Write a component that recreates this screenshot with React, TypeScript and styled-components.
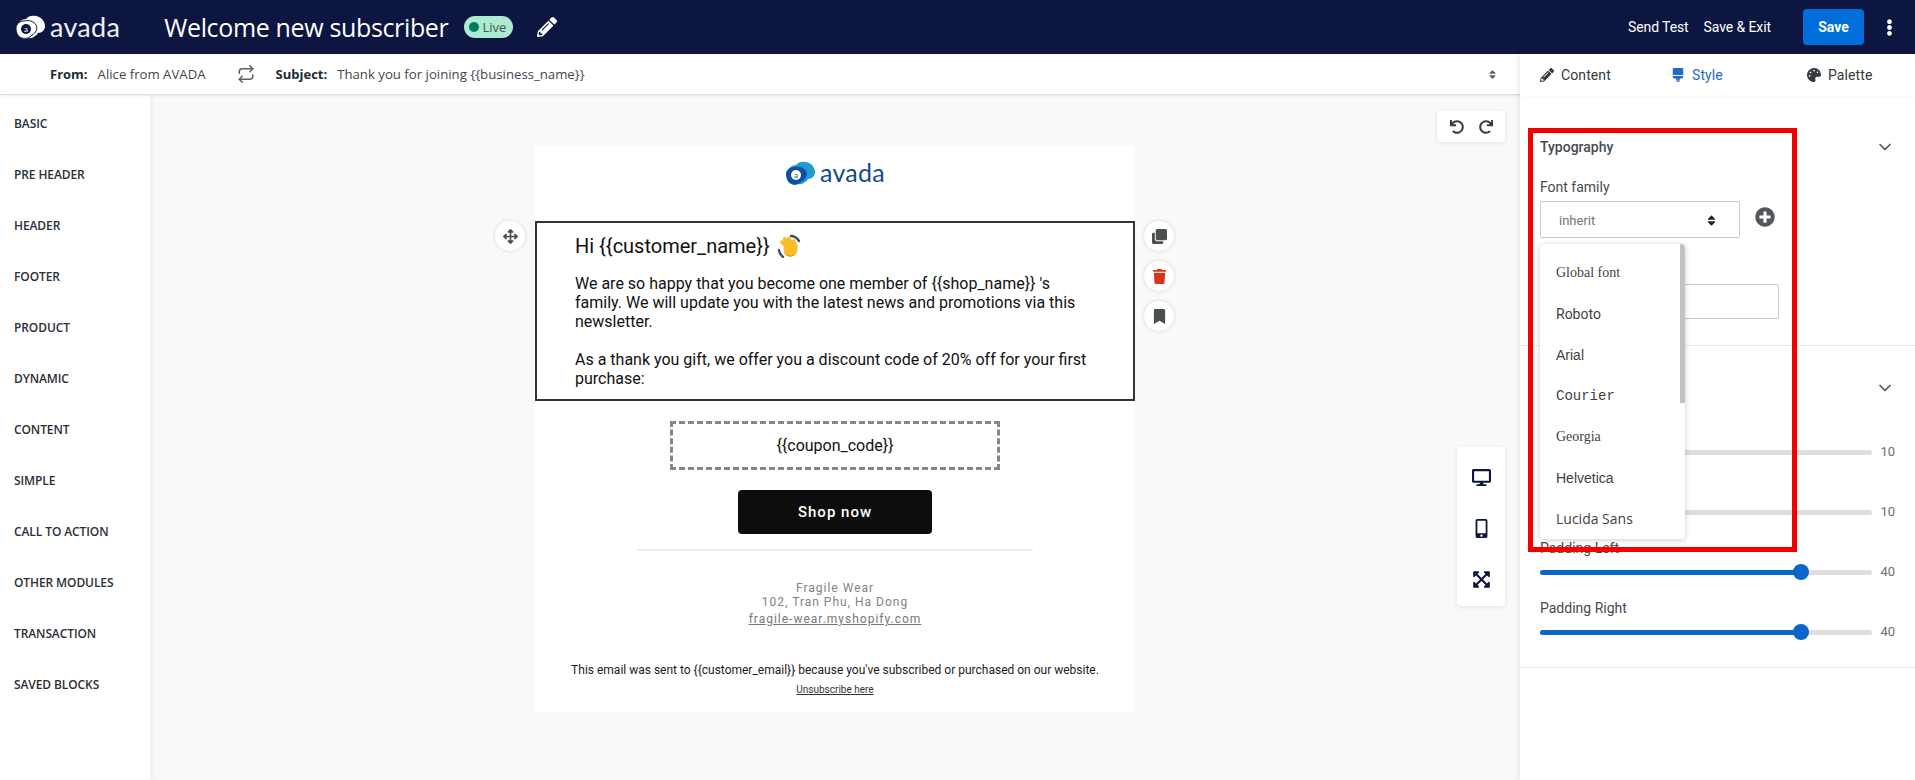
import styled, { createGlobalStyle } from "styled-components"
import {
  FaPencilAlt, FaPalette, FaBrush, FaArrowsAlt, FaClone, FaTrash, FaBookmark,
  FaDesktop, FaMobileAlt, FaExpandArrowsAlt, FaPlusCircle, FaEllipsisV, FaSort,
  FaUndo, FaRedo,
} from "react-icons/fa"
import { FiRepeat, FiChevronDown } from "react-icons/fi"

const GlobalStyle = createGlobalStyle`
  * { box-sizing: border-box; }
  html, body { margin: 0; padding: 0; }
  body {
    font-family: Roboto, "Liberation Sans", sans-serif;
    color: #212b36;
    background: #fff;
  }
`

const Page = styled.div`
  position: relative;
  display: flex;
  flex-direction: column;
  height: 100vh;
  overflow: hidden;
`

/* top bar */
const TopBar = styled.header`
  flex: 0 0 54px;
  display: flex;
  align-items: center;
  padding: 0 17px 0 15px;
  background: #0d1640;
  color: #fff;
`
const LogoBox = styled.div<{ $dark?: boolean }>`
  display: flex;
  align-items: center;
  gap: 4px;
  color: ${({ $dark }) => ($dark ? "#124a8c" : "#eef0f6")};
`
const LogoWord = styled.span<{ $size: number }>`
  font-family: Lato, "Open Sans", sans-serif;
  font-size: ${({ $size }) => $size}px;
  font-weight: 400;
  line-height: 1;
  letter-spacing: 0.3px;
  margin-top: -2px;
`
const PageTitle = styled.h1`
  margin: 0 0 0 44px;
  font-family: "Open Sans", sans-serif;
  font-size: 25px;
  font-weight: 400;
  line-height: 34px;
  letter-spacing: -0.35px;
  white-space: nowrap;
`
const LiveBadge = styled.span`
  display: inline-flex;
  align-items: center;
  gap: 3px;
  height: 22px;
  width: 49px;
  margin-left: 16px;
  padding-left: 5px;
  border-radius: 11px;
  background: #aee9d1;
  color: #35604d;
  font-family: "Open Sans", sans-serif;
  font-size: 13px;
  &::before {
    content: "";
    width: 10px;
    height: 10px;
    border-radius: 50%;
    background: #007f5f;
  }
`
const TitleEdit = styled.span`
  display: flex;
  margin-left: 24px;
  font-size: 20px;
`
const TopActions = styled.div`
  display: flex;
  align-items: center;
  margin-left: auto;
  font-size: 14px;
  letter-spacing: -0.1px;
  color: #fff;
`
const TextAction = styled.span`
  & + & { margin-left: 15px; }
`
const SaveButton = styled.button`
  width: 61px;
  height: 36px;
  margin-left: 32px;
  border: 0;
  border-radius: 4px;
  background: #006fdc;
  color: #fff;
  font: 700 14px Roboto, sans-serif;
`
const MoreButton = styled.span`
  display: flex;
  margin-left: 17px;
  font-size: 17px;
`

const Body = styled.div`
  flex: 1;
  display: flex;
  min-height: 0;
`
const EditorColumn = styled.div`
  flex: 1;
  display: flex;
  flex-direction: column;
  min-width: 0;
`

/* from / subject */
const MetaBar = styled.div`
  flex: 0 0 41px;
  display: flex;
  align-items: center;
  padding: 0 22px 0 50px;
  font-family: "Open Sans", sans-serif;
  font-size: 13.2px;
  color: #3f4650;
  background: #fff;
  border-bottom: 1px solid #dcdcdc;
  box-shadow: 0 1px 2px rgba(0, 0, 0, 0.08);
  position: relative;
  z-index: 2;
`
const MetaLabel = styled.strong`
  font-weight: 700;
  font-size: 13px;
  color: #212b36;
  margin-right: 10px;
`
const SwapIcon = styled.span`
  display: flex;
  margin: 0 21px 0 31px;
  font-size: 18px;
  color: #5c6066;
`
const MetaSort = styled.span`
  display: flex;
  margin-left: auto;
  font-size: 11px;
  color: #5c6066;
`

const EditorBody = styled.div`
  flex: 1;
  display: flex;
  min-height: 0;
`

/* block list */
const BlockList = styled.nav`
  flex: 0 0 150px;
  padding-top: 3px;
  background: #fff;
  box-shadow: 2px 0 6px rgba(0, 0, 0, 0.06);
  position: relative;
  z-index: 1;
`
const BlockItem = styled.div`
  height: 51px;
  padding-left: 14px;
  display: flex;
  align-items: center;
  font-family: "Open Sans", sans-serif;
  font-size: 12px;
  font-weight: 600;
  color: #2b2f36;
  letter-spacing: -0.1px;
`

/* canvas */
const Canvas = styled.main`
  flex: 1;
  position: relative;
  display: flex;
  justify-content: center;
  align-items: flex-start;
  padding-top: 51px;
  background: #f9f9f9;
`
const FloatPanel = styled.div`
  position: absolute;
  right: 15px;
  display: flex;
  background: #fff;
  border-radius: 4px;
  box-shadow: 0 1px 5px rgba(0, 0, 0, 0.1);
  color: #3a3a3a;
`
const HistoryPanel = styled(FloatPanel)`
  top: 16px;
  width: 68px;
  height: 31px;
  align-items: center;
  justify-content: space-around;
  padding: 0 5px;
  font-size: 14px;
`
const DevicePanel = styled(FloatPanel)`
  top: 352px;
  width: 48px;
  height: 159px;
  flex-direction: column;
  align-items: center;
  gap: 32px;
  padding-top: 21px;
  color: #0d1640;
  font-size: 19px;
`

const EmailSheet = styled.article`
  position: relative;
  width: 600px;
  height: 566px;
  background: #fff;
  display: flex;
  flex-direction: column;
  align-items: center;
`
const EmailLogo = styled.div`
  height: 75px;
  padding-top: 14px;
`
const SelectedBlock = styled.section`
  position: relative;
  width: 100%;
  height: 180px;
  padding: 10px 38px 0;
  border: 2px solid #2f3636;
  color: #111;
`
const Greeting = styled.div`
  display: flex;
  align-items: center;
  gap: 7px;
  margin-bottom: 15px;
  font-size: 20px;
  line-height: 26px;
`
const Paragraph = styled.p`
  margin: 0 0 19px;
  font-size: 16px;
  line-height: 19px;
`
const RoundTool = styled.span<{ $color?: string }>`
  width: 30px;
  height: 30px;
  display: flex;
  align-items: center;
  justify-content: center;
  border-radius: 50%;
  background: #fff;
  box-shadow: 0 0 4px rgba(0, 0, 0, 0.14);
  font-size: 15px;
  color: ${({ $color }) => $color || "#4a4f52"};
`
const MoveTool = styled(RoundTool)`
  position: absolute;
  left: -42px;
  top: -2px;
`
const BlockTools = styled.div`
  position: absolute;
  right: -41px;
  top: -2px;
  display: flex;
  flex-direction: column;
  gap: 10px;
`
const CouponBox = styled.div`
  width: 330px;
  height: 49px;
  margin-top: 20px;
  display: flex;
  align-items: center;
  justify-content: center;
  border: 3px dashed #868686;
  font-size: 16px;
  color: #111;
`
const ShopButton = styled.button`
  width: 194px;
  height: 44px;
  margin-top: 20px;
  border: 0;
  border-radius: 4px;
  background: #0d0d0d;
  color: #fff;
  font: 500 15px Roboto, sans-serif;
  letter-spacing: 1px;
`
const Rule = styled.hr`
  width: 396px;
  height: 2px;
  margin: 15px 0 0;
  border: 0;
  background: #eeeeee;
`
const ShopInfo = styled.div`
  margin-top: 30px;
  text-align: center;
  font-size: 12px;
  line-height: 14px;
  letter-spacing: 1px;
  color: #828282;
`
const ShopLink = styled.a`
  display: block;
  margin-top: 3px;
  color: #777;
  text-decoration: underline;
`
const Notice = styled.div`
  margin-top: 37px;
  font-size: 12px;
  line-height: 15px;
  color: #1c1c1c;
`
const Unsubscribe = styled.a`
  margin-top: 6px;
  font-size: 10px;
  line-height: 12px;
  color: #333;
  text-decoration: underline;
`

/* right panel */
const SidePanel = styled.aside`
  flex: 0 0 395px;
  position: relative;
  z-index: 3;
  background: #fff;
  box-shadow: -2px 0 6px rgba(0, 0, 0, 0.07);
`
const Tabs = styled.div`
  height: 42px;
  display: flex;
  align-items: center;
  padding-left: 20px;
  box-shadow: 0 1px 2px rgba(0, 0, 0, 0.03);
`
const Tab = styled.div<{ $active?: boolean; $width: number }>`
  flex: 0 0 ${({ $width }) => $width}px;
  display: flex;
  align-items: center;
  gap: 7px;
  font-size: 14px;
  letter-spacing: 0.1px;
  color: ${({ $active }) => ($active ? "#1f6bc4" : "#333a40")};
  svg { font-size: 14px; }
`
const Section = styled.section<{ $height: number; $top: number }>`
  height: ${({ $height }) => $height}px;
  padding: ${({ $top }) => $top}px 20px 0;
  border-bottom: 1px solid #e8e8e8;
`
const SectionHead = styled.div`
  display: flex;
  align-items: center;
  justify-content: space-between;
  height: 20px;
  font-size: 14px;
  font-weight: 500;
  color: #454b50;
  svg { font-size: 20px; color: #555; }
`
const FieldLabel = styled.div<{ $top?: number }>`
  min-height: 16px;
  margin-top: ${({ $top }) => $top || 0}px;
  font-size: 14px;
  line-height: 16px;
  color: #454b50;
`
const FontRow = styled.div`
  display: flex;
  align-items: flex-start;
  gap: 15px;
  margin-top: 6px;
`
const SelectBox = styled.div`
  width: 200px;
  height: 37px;
  padding: 1px 21px 0 18px;
  display: flex;
  align-items: center;
  justify-content: space-between;
  border: 1px solid #c4cdd5;
  border-radius: 2px;
  font-size: 13px;
  color: #6f7479;
  svg { font-size: 13px; color: #222; }
`
const AddFont = styled.span`
  display: flex;
  margin-top: 6px;
  font-size: 20px;
  color: #54585c;
`
const SizeInput = styled.div`
  width: 239px;
  height: 35px;
  margin-top: 6px;
  border: 1px solid #c4cdd5;
  border-radius: 2px;
`
const SliderField = styled.div`
  height: 60px;
  padding-top: 12px;
`
const SliderList = styled.div`
  margin-top: 10px;
`
const SliderRow = styled.div`
  display: flex;
  align-items: center;
  gap: 8px;
  height: 16px;
  margin-top: 8px;
`
const SliderTrack = styled.div`
  position: relative;
  flex: 1;
  height: 5px;
  border-radius: 3px;
  background: #dedede;
`
const SliderFill = styled.div`
  height: 100%;
  border-radius: 3px;
  background: #0a66c8;
`
const SliderThumb = styled.span`
  position: absolute;
  top: -6px;
  width: 16px;
  height: 16px;
  margin-left: -8px;
  border-radius: 50%;
  background: #0a66c8;
`
const SliderValue = styled.span`
  font-size: 13px;
  line-height: 16px;
  color: #6b7075;
`

/* open font menu sits over the panel */
const FontMenu = styled.div`
  position: absolute;
  left: 20px;
  top: 190px;
  width: 145px;
  height: 295px;
  overflow: hidden;
  background: #fff;
  border-radius: 4px;
  box-shadow: 0 1px 6px rgba(0, 0, 0, 0.2);
  padding-top: 8px;
  z-index: 5;
`
const FontOption = styled.div<{ $font: string }>`
  height: 41px;
  padding-left: 16px;
  display: flex;
  align-items: center;
  font-family: ${({ $font }) => $font};
  font-size: 14px;
  color: #3f3f3f;
`
const MenuScroll = styled.span`
  position: absolute;
  top: 0;
  right: 0;
  width: 5px;
  height: 159px;
  background: #c2c2c2;
`
const Annotation = styled.div`
  position: absolute;
  left: 1528px;
  top: 128px;
  width: 269px;
  height: 424px;
  border: 5px solid #f50000;
  z-index: 6;
  pointer-events: none;
`

const blocks = ["BASIC", "PRE HEADER", "HEADER", "FOOTER", "PRODUCT", "DYNAMIC", "CONTENT", "SIMPLE", "CALL TO ACTION", "OTHER MODULES", "TRANSACTION", "SAVED BLOCKS"]

const fonts = [
  { name: "Global font", family: "'Liberation Serif', serif" },
  { name: "Roboto", family: "Roboto, sans-serif" },
  { name: "Arial", family: "'Liberation Sans', sans-serif" },
  { name: "Courier", family: "'Liberation Mono', monospace" },
  { name: "Georgia", family: "'Liberation Serif', serif" },
  { name: "Helvetica", family: "'Liberation Sans', sans-serif" },
  { name: "Lucida Sans", family: "'Open Sans', sans-serif" },
]

// the first two labels are covered by the open menu in the picture
const paddings = [
  { label: "", value: 10 },
  { label: "", value: 10 },
  { label: "Padding Left", value: 40 },
  { label: "Padding Right", value: 40 },
]

function LogoMark({ dark }: { dark?: boolean }) {
  const back = dark ? "#1e9ad6" : "#ffffff"
  const front = dark ? "#0f4f9c" : "#ffffff"
  const hole = dark ? "#ffffff" : "#0d1640"
  return (
    <svg width="31" height="26" viewBox="0 0 31 26">
      <path d="M3 12c0-4 4-7 8-7 2-3 6-4 10-3 5 1 9 5 9 10 0 4-3 7-7 7-2 3-6 6-10 5-2 2-6 1-8-1-2-2-3-7-2-11z" fill={back} />
      <path
        d="M1 14c0-4 4-7 8-7 5-1 10 0 12 4 2 4 0 8-4 10-2 3-7 4-10 3-4-1-6-5-6-10z"
        fill={front}
        stroke={dark ? "none" : "#0d1640"}
        strokeWidth="1"
      />
      <circle cx="11" cy="15" r="5" fill={hole} />
      <text x="11" y="18" fontSize="8" textAnchor="middle" fontFamily="Lato, sans-serif" fill={dark ? "#0f4f9c" : "#fff"}>a</text>
    </svg>
  )
}

function WaveHand() {
  return (
    <svg width="24" height="24" viewBox="0 0 24 24">
      <path d="M14 2c3 0 6 2 8 5M2 16c0 3 2 5 4 7" fill="none" stroke="#3d4f5c" strokeWidth="2.4" strokeLinecap="round" />
      <g stroke="#fcbc25" strokeWidth="3.6" strokeLinecap="round">
        <path d="M11 14 5 8M13 12 7.5 5M16 11l-4.5-6.5M19 12l-2.5-5" />
      </g>
      <circle cx="13.5" cy="15.5" r="7" fill="#fcbc25" />
      <path d="M8 19c2 3 6 4 9 2" fill="none" stroke="#e39a10" strokeWidth="1.2" strokeLinecap="round" />
    </svg>
  )
}

export default function App() {
  return (
    <Page>
      <GlobalStyle />
      <TopBar>
        <LogoBox>
          <LogoMark />
          <LogoWord $size={27}>avada</LogoWord>
        </LogoBox>
        <PageTitle>Welcome new subscriber</PageTitle>
        <LiveBadge>Live</LiveBadge>
        <TitleEdit><FaPencilAlt /></TitleEdit>
        <TopActions>
          <TextAction>Send Test</TextAction>
          <TextAction>Save &amp; Exit</TextAction>
          <SaveButton>Save</SaveButton>
          <MoreButton><FaEllipsisV /></MoreButton>
        </TopActions>
      </TopBar>
      <Body>
        <EditorColumn>
          <MetaBar>
            <MetaLabel>From:</MetaLabel>
            Alice from AVADA
            <SwapIcon><FiRepeat /></SwapIcon>
            <MetaLabel>Subject:</MetaLabel>
            {"Thank you for joining {{business_name}}"}
            <MetaSort><FaSort /></MetaSort>
          </MetaBar>
          <EditorBody>
            <BlockList>
              {blocks.map((b) => <BlockItem key={b}>{b}</BlockItem>)}
            </BlockList>
            <Canvas>
              <HistoryPanel><FaUndo /><FaRedo /></HistoryPanel>
              <DevicePanel><FaDesktop /><FaMobileAlt /><FaExpandArrowsAlt /></DevicePanel>
              <EmailSheet>
                <EmailLogo>
                  <LogoBox $dark>
                    <LogoMark dark />
                    <LogoWord $size={25}>avada</LogoWord>
                  </LogoBox>
                </EmailLogo>
                <SelectedBlock>
                  <MoveTool><FaArrowsAlt /></MoveTool>
                  <BlockTools>
                    <RoundTool><FaClone /></RoundTool>
                    <RoundTool $color="#d5361b"><FaTrash /></RoundTool>
                    <RoundTool><FaBookmark /></RoundTool>
                  </BlockTools>
                  <Greeting>{"Hi {{customer_name}}"} <WaveHand /></Greeting>
                  <Paragraph>{"We are so happy that you become one member of {{shop_name}} 's family. We will update you with the latest news and promotions via this newsletter."}</Paragraph>
                  <Paragraph>As a thank you gift, we offer you a discount code of 20% off for your first purchase:</Paragraph>
                </SelectedBlock>
                <CouponBox>{"{{coupon_code}}"}</CouponBox>
                <ShopButton>Shop now</ShopButton>
                <Rule />
                <ShopInfo>
                  Fragile Wear<br />
                  102, Tran Phu, Ha Dong
                  <ShopLink>fragile-wear.myshopify.com</ShopLink>
                </ShopInfo>
                <Notice>{"This email was sent to {{customer_email}} because you've subscribed or purchased on our website."}</Notice>
                <Unsubscribe>Unsubscribe here</Unsubscribe>
              </EmailSheet>
            </Canvas>
          </EditorBody>
        </EditorColumn>
        <SidePanel>
          <Tabs>
            <Tab $width={131}><FaPencilAlt />Content</Tab>
            <Tab $width={136} $active><FaBrush />Style</Tab>
            <Tab $width={80}><FaPalette />Palette</Tab>
          </Tabs>
          <Section $height={250} $top={41}>
            <SectionHead>Typography<FiChevronDown /></SectionHead>
            <FieldLabel $top={22}>Font family</FieldLabel>
            <FontRow>
              <SelectBox>inherit<FaSort /></SelectBox>
              <AddFont><FaPlusCircle /></AddFont>
            </FontRow>
            <FieldLabel $top={24} />
            <SizeInput />
          </Section>
          <Section $height={322} $top={32}>
            <SectionHead><span /><FiChevronDown /></SectionHead>
            <SliderList>
              {paddings.map((p, i) => (
                <SliderField key={i}>
                  <FieldLabel>{p.label}</FieldLabel>
                  <SliderRow>
                    <SliderTrack>
                      <SliderFill style={{ width: `${(p.value / 50) * 98}%` }} />
                      <SliderThumb style={{ left: `${(p.value / 50) * 98}%` }} />
                    </SliderTrack>
                    <SliderValue>{p.value}</SliderValue>
                  </SliderRow>
                </SliderField>
              ))}
            </SliderList>
          </Section>
          <FontMenu>
            {fonts.map((f) => <FontOption key={f.name} $font={f.family}>{f.name}</FontOption>)}
            <MenuScroll />
          </FontMenu>
        </SidePanel>
      </Body>
      <Annotation />
    </Page>
  )
}
